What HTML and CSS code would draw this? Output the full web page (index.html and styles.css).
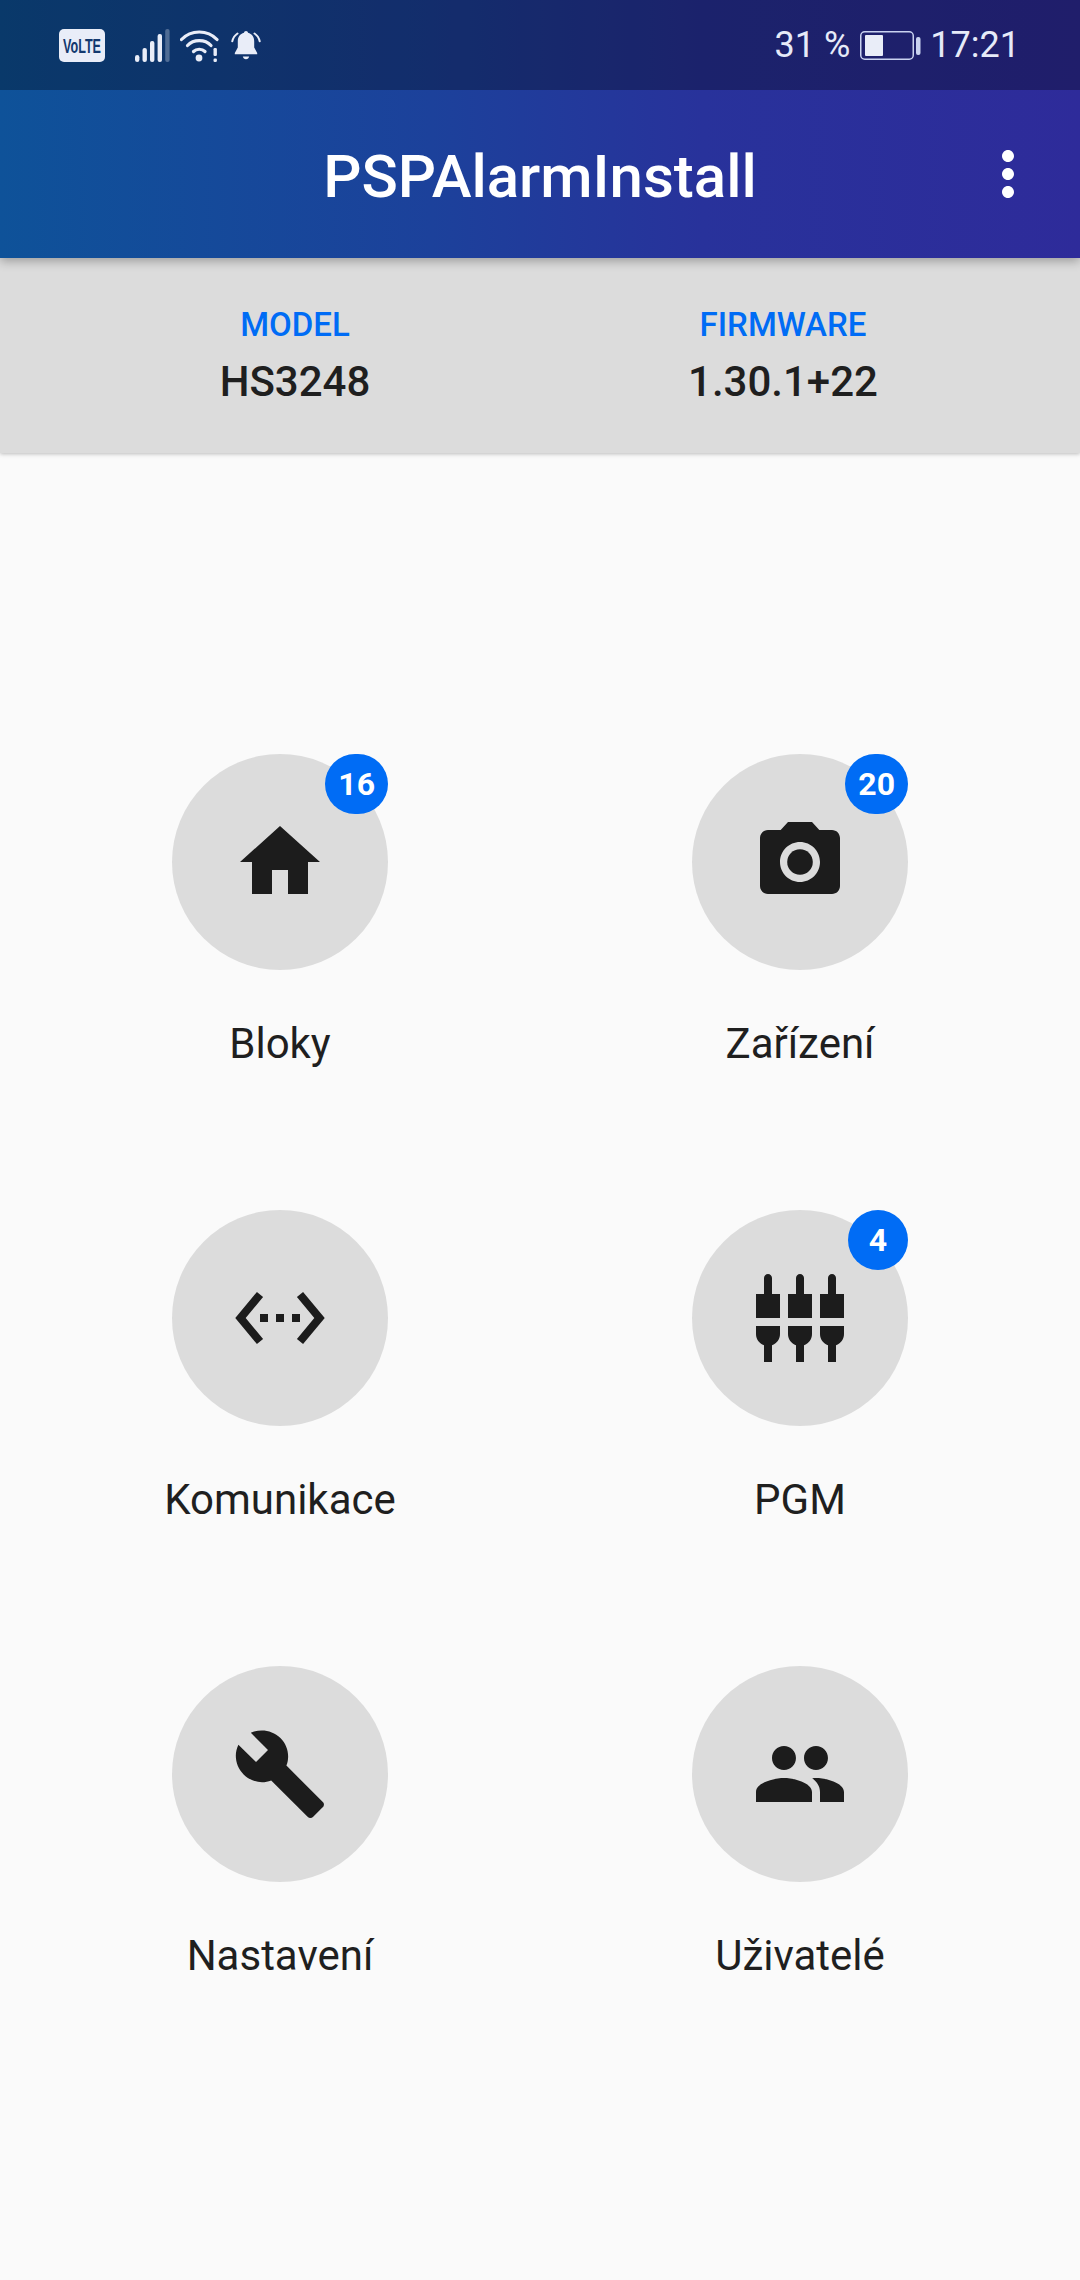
FILE: index.html
```html
<!DOCTYPE html>
<html lang="cs">
  <head>
    <meta charset="UTF-8" />
    <meta name="viewport" content="width=device-width, initial-scale=1.0" />
    <title>PSPAlarmInstall</title>
    <link rel="stylesheet" href="styles.css">
  </head>
  <body>
    <header class="top">
      <div class="status-bar">
        <svg class="ic-volte" viewBox="0 0 46 33">
          <rect width="46" height="33" rx="5" fill="#e9edf8" />
          <text transform="translate(23 24) scale(0.6 1)" text-anchor="middle" class="volte-text">VoLTE</text>
        </svg>
        <svg class="ic-signal" viewBox="0 0 35 33" fill="#e9edf8">
          <rect x="0" y="26" width="4.4" height="7" rx="2.2" />
          <rect x="7.5" y="19" width="4.4" height="14" rx="2" />
          <rect x="15" y="12" width="4.4" height="21" rx="2" />
          <rect x="22.6" y="5" width="4.4" height="28" rx="2" />
          <rect x="30.2" y="0" width="4.4" height="33" rx="2" opacity="0.3" />
        </svg>
        <svg class="ic-wifi" viewBox="0 0 39 33" fill="none" stroke="#e9edf8" stroke-width="3.2" stroke-linecap="round">
          <path d="M1.5 10.5C11 .5 27.5 .5 37 10.5" />
          <path d="M7.5 16.5C13.5 10 25 10 31 16.5" />
          <path d="M13.5 22.5C16.5 19.5 22 19.5 25 22.5" />
          <circle cx="19" cy="29" r="3.4" fill="#e9edf8" stroke="none" />
          <rect x="33.5" y="19" width="3.4" height="8" rx="1.2" fill="#e9edf8" stroke="none" />
          <rect x="33.5" y="29.5" width="3.4" height="3.5" rx="1.2" fill="#e9edf8" stroke="none" />
        </svg>
        <svg class="ic-bell" viewBox="0 0 30 30" fill="#e9edf8">
          <path d="M15 0c1.1 0 1.9.8 2 1.8 4 1 6.2 4.300 6.200 8.400v6.300l3 5.500v1.300H3.800V22l3-5.500v-6.300C6.800 6.100 9 2.800 13 1.800c.1-1 .9-1.800 2-1.800z" />
          <path d="M11.800 25.500h6.400c-.3 1.500-1.600 2.700-3.200 2.700s-2.900-1.200-3.200-2.700z" />
          <path d="M6.500 2.500C3.800 4.300 2 7 1.300 10.300M23.500 2.500c2.700 1.800 4.500 4.500 5.200 7.800" fill="none" stroke="#e9edf8" stroke-width="2" stroke-linecap="round" />
        </svg>
        <span class="status-spacer"></span>
        <span class="status-text">31 %</span>
        <svg class="ic-battery" viewBox="0 0 61 29">
          <rect x="0.750" y="0.750" width="52.500" height="27.500" rx="4" fill="none" stroke="#c9d2f0" stroke-width="1.500" />
          <rect x="5" y="4" width="18" height="21" rx="1" fill="#e9edf8" />
          <rect x="56" y="6" width="4.500" height="18" rx="2" fill="#c9d2f0" />
        </svg>
        <span class="status-text">17:21</span>
      </div>
      <div class="app-bar">
        <span></span>
        <h1 class="app-title">PSPAlarmInstall</h1>
        <svg class="ic-more" viewBox="0 0 24 24" fill="#fff">
          <path d="M12 8c1.1 0 2-.9 2-2s-.9-2-2-2-2 .9-2 2 .9 2 2 2zm0 2c-1.100 0-2 .9-2 2s.9 2 2 2 2-.9 2-2-.9-2-2-2zm0 6c-1.100 0-2 .9-2 2s.9 2 2 2 2-.9 2-2-.9-2-2-2z" />
        </svg>
      </div>
    </header>

    <section class="info-panel">
      <div class="info-col">
        <div class="info-label">MODEL</div>
        <div class="info-value">HS3248</div>
      </div>
      <div class="info-col">
        <div class="info-label">FIRMWARE</div>
        <div class="info-value">1.30.1+22</div>
      </div>
    </section>

    <main class="menu">
      <div class="menu-grid">
        <a class="menu-item">
          <div class="menu-circle">
            <svg class="menu-icon" viewBox="0 0 24 24"><path d="M10 20v-6h4v6h5v-8h3L12 3 2 12h3v8z" /></svg>
            <span class="badge">16</span>
          </div>
          <div class="menu-label">Bloky</div>
        </a>
        <a class="menu-item">
          <div class="menu-circle">
            <svg class="menu-icon" viewBox="0 0 24 24">
              <circle cx="12" cy="12" r="3.200" />
              <path d="M9 2L7.170 4H4c-1.100 0-2 .9-2 2v12c0 1.100.9 2 2 2h16c1.100 0 2-.9 2-2V6c0-1.100-.9-2-2-2h-3.170L15 2H9zm3 15c-2.760 0-5-2.240-5-5s2.240-5 5-5 5 2.240 5 5-2.240 5-5 5z" />
            </svg>
            <span class="badge">20</span>
          </div>
          <div class="menu-label">Zařízení</div>
        </a>
        <a class="menu-item">
          <div class="menu-circle">
            <svg class="menu-icon" viewBox="0 0 24 24">
              <path d="M7.770 6.760L6.230 5.480.82 12l5.410 6.520 1.540-1.280L3.420 12l4.350-5.240zM7 13h2v-2H7v2zm10-2h-2v2h2v-2zm-6 2h2v-2h-2v2zm6.770-7.520l-1.540 1.280L20.580 12l-4.350 5.240 1.540 1.280L23.180 12l-5.410-6.520z" />
            </svg>
          </div>
          <div class="menu-label">Komunikace</div>
        </a>
        <a class="menu-item">
          <div class="menu-circle">
            <svg class="menu-icon" viewBox="0 0 24 24">
              <path d="M5 2c0-.55-.45-1-1-1s-1 .45-1 1v4H1v6h6V6H5V2zm4 14c0 1.300.84 2.400 2 2.820V23h2v-4.180c1.160-.41 2-1.510 2-2.820v-2H9v2zm-8 0c0 1.300.84 2.400 2 2.820V23h2v-4.180C6.160 18.400 7 17.300 7 16v-2H1v2zM21 6V2c0-.55-.45-1-1-1s-1 .45-1 1v4h-2v6h6V6h-2zm-8-4c0-.55-.45-1-1-1s-1 .45-1 1v4H9v6h6V6h-2V2zm4 14c0 1.300.84 2.400 2 2.820V23h2v-4.180c1.160-.41 2-1.510 2-2.820v-2h-6v2z" />
            </svg>
            <span class="badge">4</span>
          </div>
          <div class="menu-label">PGM</div>
        </a>
        <a class="menu-item">
          <div class="menu-circle">
            <svg class="menu-icon" viewBox="0 0 24 24">
              <path d="M22.700 19l-9.100-9.100c.9-2.300.4-5-1.500-6.900-2-2-5-2.400-7.400-1.300L9 6 6 9 1.600 4.700C.4 7.100.9 10.100 2.900 12.100c1.900 1.900 4.600 2.400 6.900 1.500l9.100 9.100c.4.4 1 .4 1.400 0l2.300-2.300c.5-.4.5-1.100.1-1.400z" />
            </svg>
          </div>
          <div class="menu-label">Nastavení</div>
        </a>
        <a class="menu-item">
          <div class="menu-circle">
            <svg class="menu-icon" viewBox="0 0 24 24">
              <path d="M16 11c1.660 0 2.990-1.340 2.990-3S17.660 5 16 5c-1.660 0-3 1.340-3 3s1.340 3 3 3zm-8 0c1.660 0 2.990-1.340 2.990-3S9.660 5 8 5C6.340 5 5 6.340 5 8s1.340 3 3 3zm0 2c-2.330 0-7 1.170-7 3.500V19h14v-2.500c0-2.330-4.670-3.500-7-3.500zm8 0c-.29 0-.62.02-.97.05 1.160.84 1.970 1.970 1.970 3.450V19h6v-2.500c0-2.330-4.670-3.500-7-3.500z" />
            </svg>
          </div>
          <div class="menu-label">Uživatelé</div>
        </a>
      </div>
    </main>
  </body>
</html>
```

FILE: styles.css
```css
:root {
  --bg-color: #fafafa;
  --panel-bg: #dcdcdc;
  --text-color: #1f1f1f;
  --accent: #006cf5;
  --status-fg: #e6eaf8;
}
html,
body {
  height: 100%;
}
body {
  margin: 0;
  display: flex;
  flex-direction: column;
  font-family: Roboto, "Noto Sans", sans-serif;
  background-color: var(--bg-color);
  color: var(--text-color);
}

/* Header gradient runs under both the status bar and the app bar */
.top {
  position: relative;
  z-index: 2;
  background: linear-gradient(90deg, #0e5299 0%, #1c419b 40%, #28329b 65%, #2e2b9a 100%);
  box-shadow: 0 3px 10px rgba(0, 0, 0, 0.3);
}
.status-bar {
  height: 90px;
  box-sizing: border-box;
  display: flex;
  align-items: center;
  padding: 0 60px 0 59px;
  background-color: rgba(0, 0, 0, 0.3);
}
.status-spacer {
  flex: 1;
}
.status-text {
  font-size: 36px;
  font-weight: 400;
  color: var(--status-fg);
}
.volte-text {
  font-family: "Liberation Sans", sans-serif;
  font-size: 21px;
  font-weight: 700;
  fill: #13396f;
}
.ic-volte {
  width: 46px;
  height: 33px;
  margin-right: 30px;
}
.ic-signal {
  width: 35px;
  height: 33px;
  margin-right: 10px;
}
.ic-wifi {
  width: 39px;
  height: 33px;
  margin-right: 12px;
}
.ic-bell {
  width: 30px;
  height: 30px;
  margin-top: 2px;
}
.ic-battery {
  width: 61px;
  height: 29px;
  margin: 0 9px 0 10px;
}
.app-bar {
  height: 168px;
  box-sizing: border-box;
  display: grid;
  grid-template-columns: 1fr auto 1fr;
  align-items: center;
}
.app-title {
  margin: 0;
  padding-top: 4px;
  font-size: 60px;
  font-weight: 500;
  color: #fff;
}
.ic-more {
  width: 72px;
  height: 72px;
  justify-self: end;
  margin-right: 36px;
}

/* Model / firmware strip */
.info-panel {
  position: relative;
  z-index: 1;
  display: grid;
  grid-template-columns: 1fr 1fr;
  padding: 48px 53px 47px 51px;
  background-color: var(--panel-bg);
  box-shadow: 0 1px 4px rgba(0, 0, 0, 0.25);
}
.info-col {
  text-align: center;
}
.info-label {
  font-size: 33px;
  font-weight: 500;
  line-height: 38px;
  color: var(--accent);
}
.info-value {
  margin-top: 14px;
  font-size: 42px;
  font-weight: 500;
  line-height: 48px;
}

/* Six round shortcuts, two to a row */
.menu {
  flex: 1;
  display: flex;
  align-items: center;
  padding: 0 20px;
}
.menu-grid {
  flex: 1;
  display: grid;
  grid-template-columns: 1fr 1fr;
  row-gap: 142px;
}
.menu-item {
  display: flex;
  flex-direction: column;
  align-items: center;
}
.menu-circle {
  position: relative;
  width: 216px;
  height: 216px;
  display: flex;
  align-items: center;
  justify-content: center;
  border-radius: 50%;
  background-color: var(--panel-bg);
}
.menu-icon {
  width: 96px;
  height: 96px;
  fill: #1c1c1c;
}
.badge {
  position: absolute;
  top: 0;
  right: 0;
  min-width: 60px;
  height: 60px;
  box-sizing: border-box;
  padding: 0 13px;
  border-radius: 30px;
  background-color: var(--accent);
  color: #fff;
  font-size: 32px;
  font-weight: 700;
  line-height: 60px;
  text-align: center;
}
.menu-label {
  margin-top: 50px;
  font-size: 42px;
  line-height: 48px;
}
```
